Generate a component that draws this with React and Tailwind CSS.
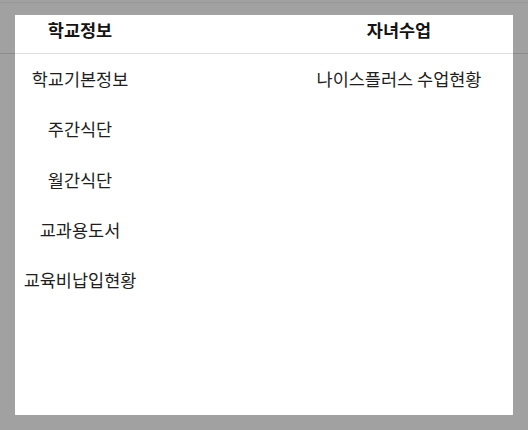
import React from "react";

const leftItems = ["학교기본정보", "주간식단", "월간식단", "교과용도서", "교육비납입현황"];
const rightItems = ["나이스플러스 수업현황"];

export default function App() {
  return (
    <div
      className="relative w-[528px] h-[430px] bg-[#a1a1a1] overflow-hidden pt-[15px] pl-[15px]"
      style={{ fontFamily: '"Noto Sans CJK KR", "Noto Sans", sans-serif' }}
    >
      <div className="absolute left-0 top-[2px] w-full h-px bg-black/[0.06]" />
      <div className="w-[498px] h-[400px] bg-white text-[17.5px] text-[#1e1e1e]">
        <div className="flex h-[39px]">
          <div className="w-[130px] text-center font-bold leading-[30px] text-[#141414]">학교정보</div>
          <div className="flex-1" />
          <div className="w-[228px] text-center font-bold leading-[30px] text-[#141414]">자녀수업</div>
        </div>
        <div className="flex">
          <div className="w-[130px] flex flex-col">
            {leftItems.map((t) => (
              <div key={t} className="h-[50.3px] flex items-center justify-center whitespace-nowrap">
                {t}
              </div>
            ))}
          </div>
          <div className="flex-1" />
          <div className="w-[228px] flex flex-col">
            {rightItems.map((t) => (
              <div key={t} className="h-[50.3px] flex items-center justify-center whitespace-nowrap">
                {t}
              </div>
            ))}
          </div>
        </div>
      </div>
      <div className="absolute left-0 top-[53px] w-full h-px bg-black/[0.13]" />
    </div>
  );
}
